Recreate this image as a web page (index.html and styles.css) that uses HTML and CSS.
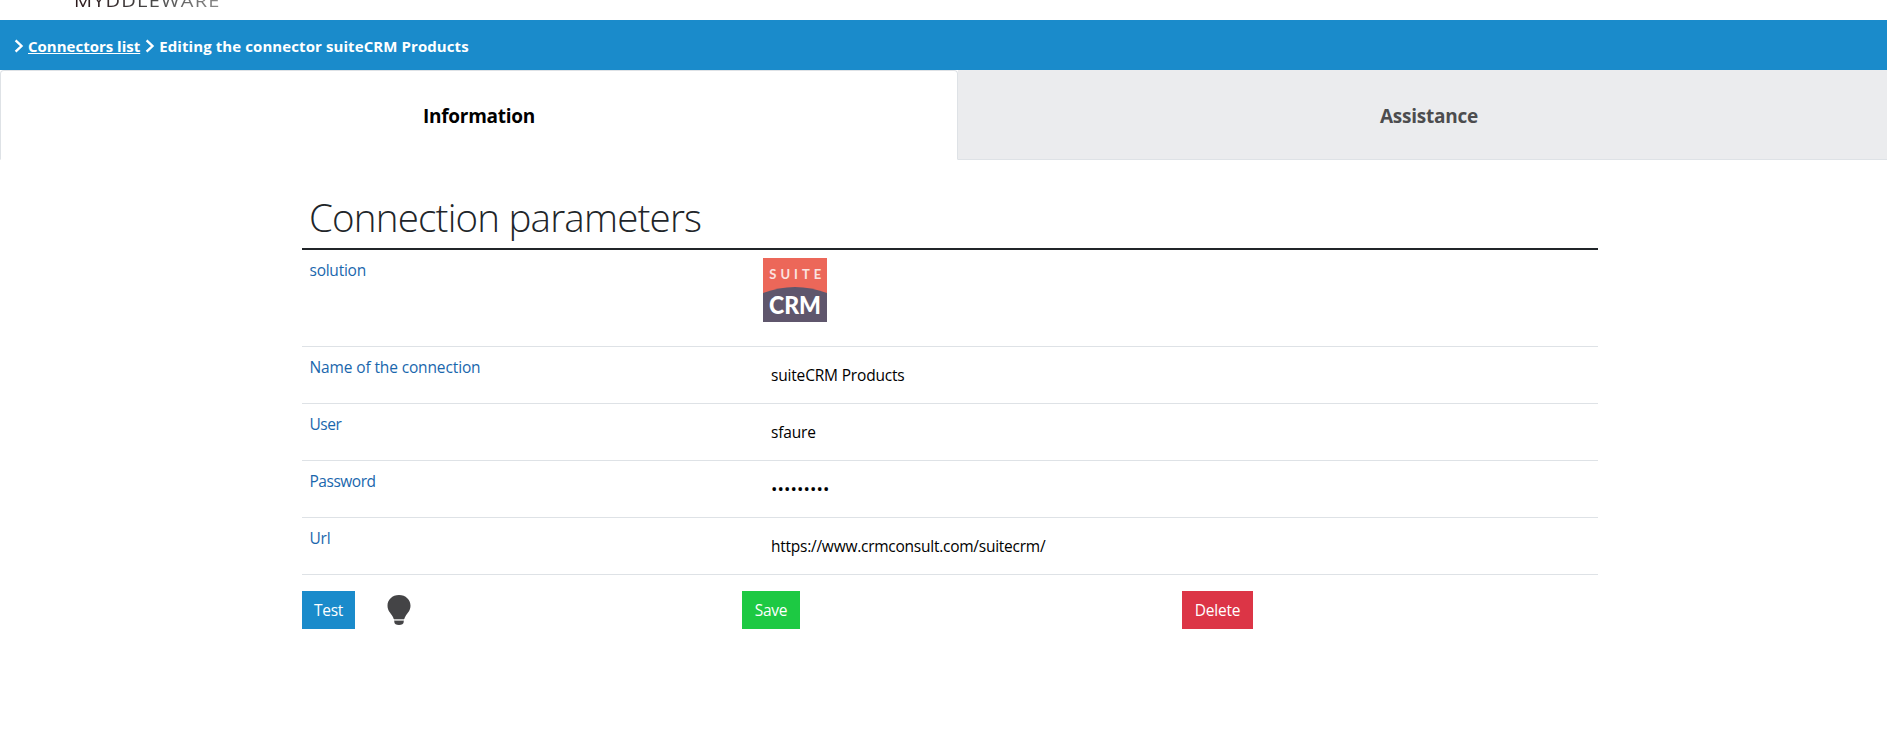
FILE: index.html
```html
<!DOCTYPE html>
<html lang="en">
<head>
<meta charset="utf-8">
<title>Myddleware - Connector</title>
<link rel="stylesheet" href="styles.css">
</head>
<body>
<header class="brand"><span class="brand-name">MYDDLEWARE</span></header>
<nav class="breadcrumb">
  <svg class="chevron" viewBox="0 0 10 16"><path d="M1.600 2.300 7.500 8 1.600 13.700"/></svg>
  <a class="crumb-link" href="#">Connectors list</a>
  <svg class="chevron" viewBox="0 0 10 16"><path d="M1.600 2.300 7.500 8 1.600 13.700"/></svg>
  <span class="crumb-current">Editing the connector suiteCRM Products</span>
</nav>
<div class="tabs">
  <div class="tab tab-active">Information</div>
  <div class="tab tab-idle">Assistance</div>
</div>
<main class="content">
  <h1 class="title">Connection parameters</h1>
  <div class="row row-solution">
    <div class="label">solution</div>
    <div class="value-logo">
      <svg class="logo" viewBox="0 0 64 64">
        <rect width="64" height="64" fill="#ec6759"/>
        <path d="M0 35Q32 23 64 35V64H0Z" fill="#5f566c"/>
        <text class="logo-suite" x="6.300" y="20.500" textLength="52" lengthAdjust="spacing">SUITE</text>
        <text class="logo-crm" x="6" y="55.500" textLength="52" lengthAdjust="spacingAndGlyphs">CRM</text>
      </svg>
    </div>
  </div>
  <div class="row"><div class="label label-name">Name of the connection</div><div class="value">suiteCRM Products</div></div>
  <div class="row"><div class="label label-short">User</div><div class="value">sfaure</div></div>
  <div class="row"><div class="label label-short">Password</div><div class="value value-password">•••••••••</div></div>
  <div class="row"><div class="label">Url</div><div class="value value-url">https://www.crmconsult.com/suitecrm/</div></div>
  <div class="actions">
    <div class="action">
      <button class="btn btn-test">Test</button>
      <svg class="bulb" viewBox="0 0 24 30"><path d="M12 0C5.200 0 .5 4.800.5 10.800c0 5 3.200 7.200 5 10.400.5.9.9 1.800 1.200 2.800h10.600c.3-1 .7-1.900 1.200-2.800 1.800-3.200 5-5.400 5-10.400C23.500 4.800 18.800 0 12 0Z"/><path class="bulb-ring" d="M7 24h10v1.700H7Z"/><path d="M7.300 25.700h9.400V27c0 1.900-2 3-4.700 3s-4.700-1.100-4.700-3Z"/></svg>
    </div>
    <div class="action"><button class="btn btn-save">Save</button></div>
    <div class="action"><button class="btn btn-delete">Delete</button></div>
  </div>
</main>
</body>
</html>
```
FILE: styles.css
```css
* { box-sizing: border-box; }
body { margin: 0; height: 733px; overflow: hidden; background: #fff; font: 15.5px/24px "Open Sans", sans-serif; color: #000; }
.brand { height: 20px; overflow: hidden; padding-left: 74px; }
.brand-name { display: block; width: max-content; margin-top: -9px; font: 17px/20px "Open Sans", sans-serif; letter-spacing: 1px; color: transparent; background: linear-gradient(90deg, #2b1719, #444 50%, #8a8a8a); background-clip: text; -webkit-background-clip: text; transform: scaleX(1.18); transform-origin: left; }
.breadcrumb { height: 50px; display: flex; align-items: center; padding: 2px 14px 0; background: #1a8bcb; color: #fff; font-weight: 700; white-space: nowrap; font-size: 15px; }
.chevron { width: 10px; height: 16px; margin-top: -1px; fill: none; stroke: #fff; stroke-width: 2.400; }
.crumb-link { color: #fff; margin: 0 5px 0 4px; }
.crumb-current { margin-left: 4px; letter-spacing: 0.09px; }
.tabs { height: 90px; display: flex; font-size: 19px; font-weight: 700; letter-spacing: -0.25px; }
.tab { display: flex; align-items: center; justify-content: center; padding-top: 2px; }
.tab-active { width: 958px; border: 1px solid #dee2e6; border-bottom-color: #fff; border-radius: 4px 4px 0 0; }
.tab-idle { flex: 1; padding-left: 13px; background: #ebecee; color: #4c4c4e; border-bottom: 1px solid #dee2e6; }
.content { width: 1296px; margin-left: 302px; }
.title { margin: 31px 0 0; height: 59px; padding-left: 7px; border-bottom: 2px solid #212529; font-size: 38.5px; font-weight: 300; line-height: 53px; letter-spacing: -0.8px; color: #212529; white-space: nowrap; }
.row { display: flex; height: 57px; border-bottom: 1px solid #dee2e6; white-space: nowrap; }
.row-solution { height: 97px; }
.label { width: 461px; padding: 8px 7.500px; color: #1a67ad; letter-spacing: -0.25px; }
.label-name { letter-spacing: -0.13px; }
.label-short { letter-spacing: -0.48px; }
.value { padding: 16px 8px; letter-spacing: -0.18px; }
.value-url { letter-spacing: -0.25px; }
.value-password { font-size: 17px; letter-spacing: 0.1px; }
.value-logo { padding-top: 8px; }
.logo { display: block; width: 64px; height: 64px; }
.logo-suite { font: 700 13px Lato, sans-serif; fill: #fbe3e0; }
.logo-crm { font: 900 24px Lato, sans-serif; fill: #fff; }
.actions { display: grid; grid-template-columns: 440px 440px 1fr; padding-top: 16px; }
.action { display: flex; align-items: flex-start; }
.btn { height: 38px; padding: 0; border: 0; color: #fff; font: 15.5px/24px "Open Sans", sans-serif; letter-spacing: -0.25px; }
.btn-test { width: 53px; background: #1a8bcb; }
.btn-save { width: 58px; background: #1dc943; }
.btn-delete { width: 71px; background: #dc3546; }
.bulb { width: 24px; height: 30px; margin: 4px 0 0 32px; fill: #444446; }
.bulb-ring { fill: #c8c8c8; }
```
